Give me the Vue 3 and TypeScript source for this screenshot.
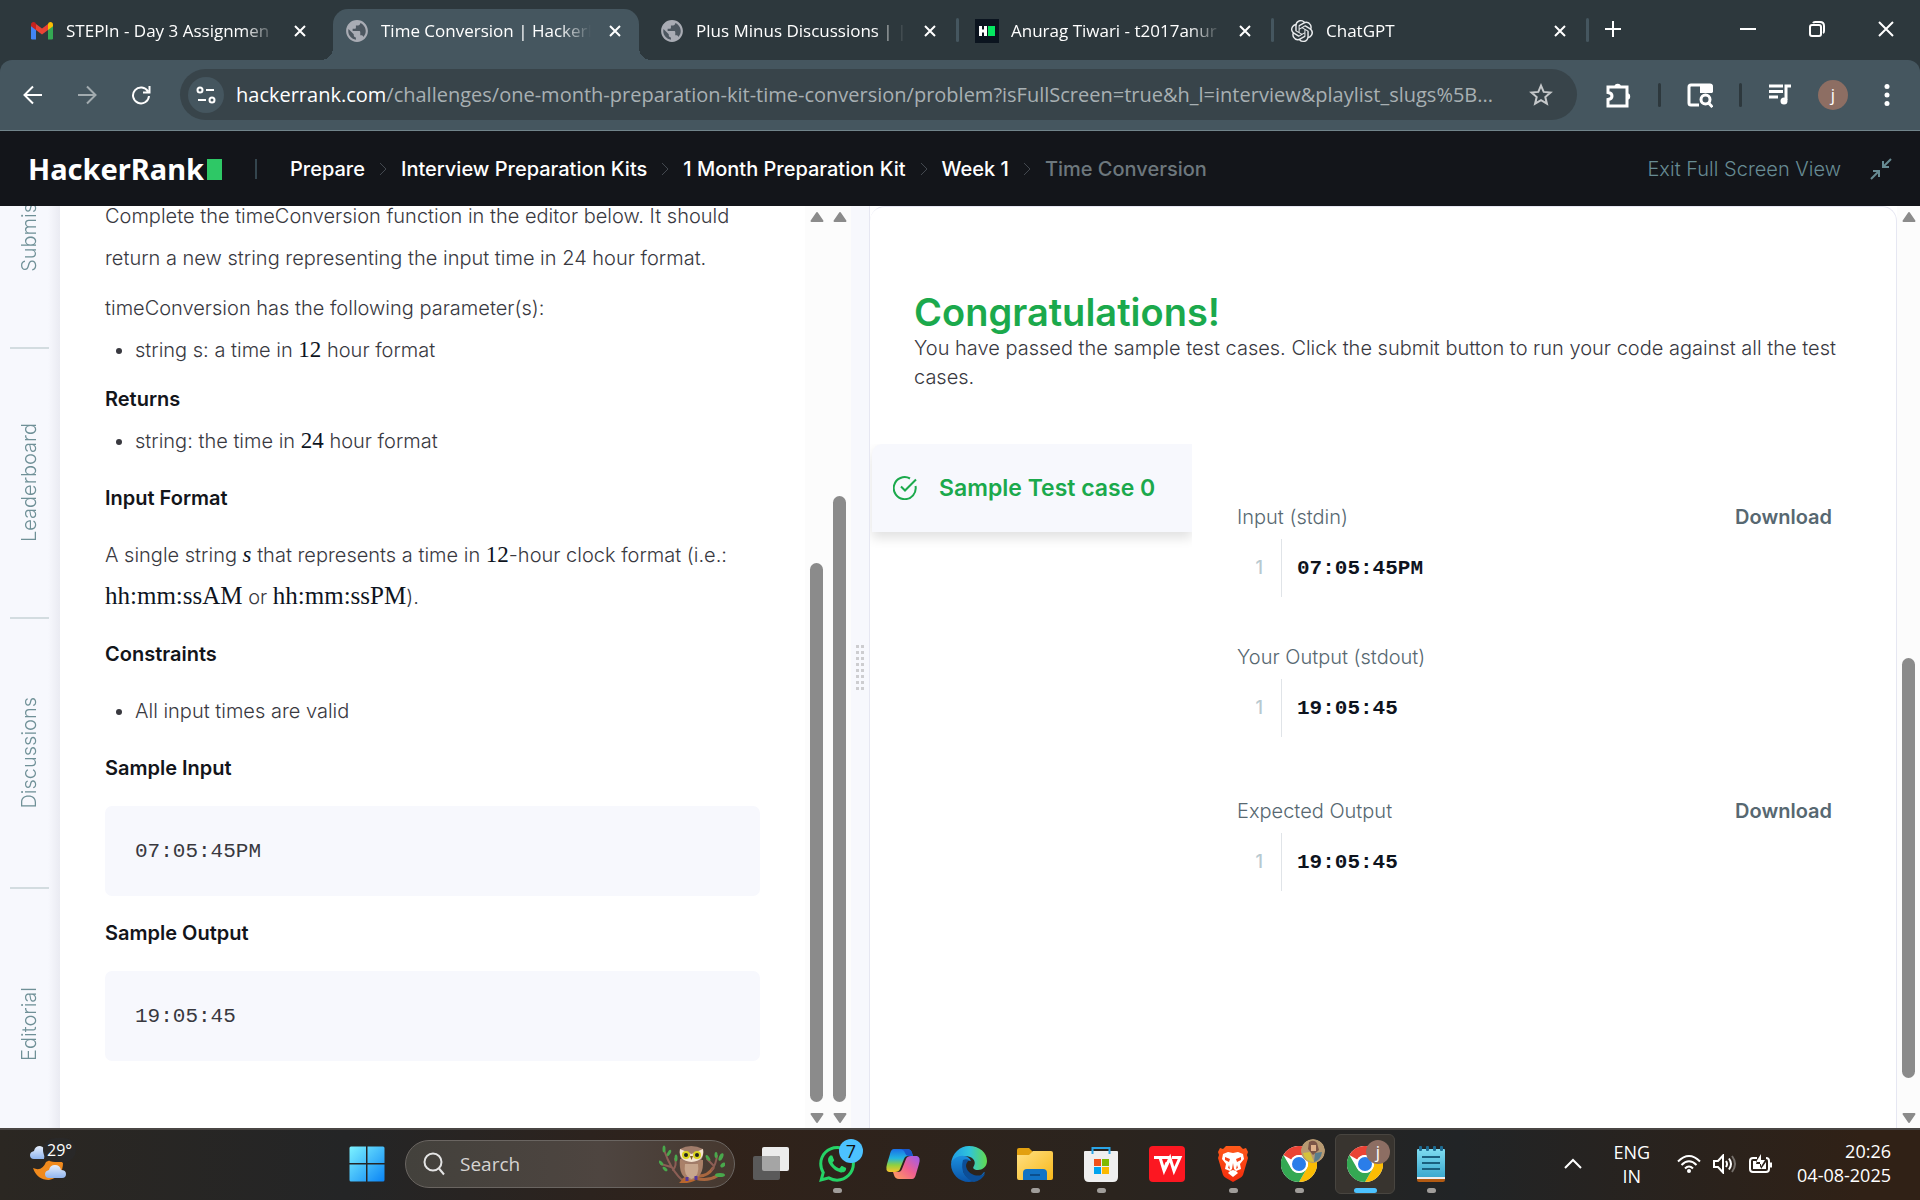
<script setup lang="ts">
interface Tab {
  title: string
  icon: 'gmail' | 'globe' | 'hacker' | 'gpt'
  active?: boolean
  separator?: boolean
}

interface ResultBlock {
  label: string
  value: string
  download: boolean
}

interface Scroll {
  before: number
  thumb: number
  after: number
}

const tabs: Tab[] = [
  { title: 'STEPIn - Day 3 Assignmen', icon: 'gmail' },
  { title: 'Time Conversion | HackerR', icon: 'globe', active: true },
  { title: 'Plus Minus Discussions | | ', icon: 'globe', separator: true },
  { title: 'Anurag Tiwari - t2017anur', icon: 'hacker', separator: true },
  { title: 'ChatGPT', icon: 'gpt', separator: true },
]

const crumbs: string[] = ['Prepare', 'Interview Preparation Kits', '1 Month Preparation Kit', 'Week 1']
const sideTabs: string[] = ['Submissions', 'Leaderboard', 'Discussions', 'Editorial']

const results: ResultBlock[] = [
  { label: 'Input (stdin)', value: '07:05:45PM', download: true },
  { label: 'Your Output (stdout)', value: '19:05:45', download: false },
  { label: 'Expected Output', value: '19:05:45', download: true },
]

const innerScroll: Scroll = { before: 331, thumb: 539, after: 0 }
const outerScroll: Scroll = { before: 264, thumb: 606, after: 0 }
const resultScroll: Scroll = { before: 426, thumb: 420, after: 24 }
const leftScrolls: Scroll[] = [innerScroll, outerScroll]
</script>

<template>
  <div class="screen">
    <!-- Browser tab strip -->
    <div class="strip">
      <div v-for="tab in tabs" :key="tab.title" class="tab" :class="{ active: tab.active, separated: tab.separator }">
        <svg v-if="tab.icon === 'gmail'" class="favicon" viewBox="0 0 24 24">
          <path fill="#4285f4" d="M1 6v13.200q0 1.300 1.300 1.300H6V10z" />
          <path fill="#34a853" d="M18 10v10.500h3.700q1.300 0 1.300-1.300V6z" />
          <path fill="#fbbc04" d="M18 5v6l5-3.800V5.500C23 3 20.400 2.300 18.800 3.600z" />
          <path fill="#ea4335" d="M6 11V5l6 4.600L18 5v6l-6 4.600z" />
          <path fill="#c5221f" d="M1 5.500v1.700L6 11V5l-.8-1.400C3.600 2.300 1 3 1 5.500z" />
        </svg>
        <svg v-else-if="tab.icon === 'globe'" class="favicon" viewBox="1 1 22 22">
          <circle cx="12" cy="12" r="9" fill="#4d5760" />
          <path fill="#a9acb4" d="M12 2C6.480 2 2 6.480 2 12s4.480 10 10 10 10-4.480 10-10S17.520 2 12 2zm-1 17.930c-3.950-.49-7-3.850-7-7.930 0-.62.08-1.210.21-1.790L9 15v1c0 1.100.9 2 2 2v1.930zm6.900-2.540c-.26-.81-1-1.390-1.900-1.390h-1v-3c0-.55-.45-1-1-1H8v-2h2c.55 0 1-.45 1-1V7h2c1.100 0 2-.9 2-2v-.41c2.930 1.190 5 4.060 5 7.410 0 2.080-.8 3.970-2.100 5.390z" />
        </svg>
        <svg v-else-if="tab.icon === 'hacker'" class="favicon" viewBox="0 0 24 24">
          <rect width="24" height="24" fill="#0b141f" />
          <path fill="#fff" d="M4 7h3v3.500h2V7h3v10H9v-3.500H7V17H4z" />
          <rect x="13" y="7" width="7" height="10" fill="#05e761" />
        </svg>
        <svg v-else class="favicon" viewBox="-1 -1 26 26">
          <path fill="#e8eaec" d="M22.2819 9.8211a5.9847 5.9847 0 0 0-.5157-4.9108 6.0462 6.0462 0 0 0-6.5098-2.9A6.0651 6.0651 0 0 0 4.9807 4.1818a5.9847 5.9847 0 0 0-3.9977 2.9 6.0462 6.0462 0 0 0 .7427 7.0966 5.98 5.98 0 0 0 .511 4.9107 6.051 6.051 0 0 0 6.5146 2.9001A5.9847 5.9847 0 0 0 13.2599 24a6.0557 6.0557 0 0 0 5.7718-4.2058 5.9894 5.9894 0 0 0 3.9977-2.9001 6.0557 6.0557 0 0 0-.7475-7.0729zm-9.022 12.6081a4.4755 4.4755 0 0 1-2.8764-1.0408l.1419-.0804 4.7783-2.7582a.7948.7948 0 0 0 .3927-.6813v-6.7369l2.02 1.1686a.071.071 0 0 1 .038.052v5.5826a4.504 4.504 0 0 1-4.4945 4.4944zm-9.6607-4.1254a4.4708 4.4708 0 0 1-.5346-3.0137l.142.0852 4.783 2.7582a.7712.7712 0 0 0 .7806 0l5.8428-3.3685v2.3324a.0804.0804 0 0 1-.0332.0615L9.74 19.9502a4.4992 4.4992 0 0 1-6.1408-1.6464zM2.3408 7.8956a4.485 4.485 0 0 1 2.3655-1.9728V11.6a.7664.7664 0 0 0 .3879.6765l5.8144 3.3543-2.0201 1.1685a.0757.0757 0 0 1-.071 0l-4.8303-2.7865A4.504 4.504 0 0 1 2.3408 7.872zm16.5963 3.8558L13.1038 8.364 15.1192 7.2a.0757.0757 0 0 1 .071 0l4.8303 2.7913a4.4944 4.4944 0 0 1-.6765 8.1042v-5.6772a.79.79 0 0 0-.407-.667zm2.0107-3.0231l-.142-.0852-4.7735-2.7818a.7759.7759 0 0 0-.7854 0L9.409 9.2297V6.8974a.0662.0662 0 0 1 .0284-.0615l4.8303-2.7866a4.4992 4.4992 0 0 1 6.6802 4.66zM8.3065 12.863l-2.02-1.1638a.0804.0804 0 0 1-.038-.0567V6.0742a4.4992 4.4992 0 0 1 7.3757-3.4537l-.142.0805L8.704 5.459a.7948.7948 0 0 0-.3927.6813zm1.0976-2.3654l2.602-1.4998 2.6069 1.4998v2.9994l-2.5974 1.4997-2.6067-1.4997Z" />
        </svg>
        <span class="tab-title">{{ tab.title }}</span>
        <button class="tab-close" aria-label="Close tab">
          <svg width="12" height="12" viewBox="0 0 12 12"><path d="M1 1l10 10M11 1L1 11" /></svg>
        </button>
      </div>
      <button class="new-tab" aria-label="New tab">
        <svg width="16" height="16" viewBox="0 0 16 16"><path d="M8 0v16M0 8h16" /></svg>
      </button>
      <div class="window-buttons">
        <button aria-label="Minimize"><svg width="16" height="16" viewBox="0 0 16 16"><path d="M0 8h16" /></svg></button>
        <button aria-label="Restore">
          <svg width="16" height="16" viewBox="0 0 16 16"><rect x="1" y="4" width="11" height="11" rx="2" /><path d="M4 2q.5-1 2-1h5q4 0 4 4v5q0 1.500-1 2" /></svg>
        </button>
        <button aria-label="Close"><svg width="16" height="16" viewBox="0 0 16 16"><path d="M1 1l14 14M15 1L1 15" /></svg></button>
      </div>
    </div>

    <!-- Browser toolbar -->
    <div class="toolbar">
      <div class="nav">
        <button aria-label="Back"><svg width="20" height="20" viewBox="0 0 20 20"><path d="M19 10H2M10 1.500L1.500 10l8.500 8.500" /></svg></button>
        <button aria-label="Forward" class="dim"><svg width="20" height="20" viewBox="0 0 20 20"><path d="M1 10h17M10 1.500l8.500 8.500-8.500 8.500" /></svg></button>
        <button aria-label="Reload"><svg width="20" height="20" viewBox="0 0 20 20"><path d="M17 6.500A8 8 0 1 0 18 11M18.500 1v6.500H12" /></svg></button>
      </div>
      <div class="omnibox">
        <button class="site-info" aria-label="View site information">
          <svg width="20" height="20" viewBox="0 0 20 20"><circle cx="4" cy="5" r="2.500" /><path d="M10 5h8M2 15h8" /><circle cx="16" cy="15" r="2.500" /></svg>
        </button>
        <div class="url"><b>hackerrank.com</b>/challenges/one-month-preparation-kit-time-conversion/problem?isFullScreen=true&amp;h_l=interview&amp;playlist_slugs%5B...</div>
        <button class="star" aria-label="Bookmark this tab">
          <svg width="24" height="24" viewBox="0 0 24 24"><path d="M12 2.600l2.700 6.300 6.800.6-5.200 4.500 1.600 6.700-5.900-3.600-5.900 3.600 1.600-6.700-5.200-4.500 6.800-.6z" /></svg>
        </button>
      </div>
      <div class="tools">
        <button aria-label="Extensions">
          <svg width="26" height="26" viewBox="0 0 26 26"><path d="M2 5h19v19H2v-6.500q4-.5 4-3.500t-4-3.500z" /><path class="solid" d="M8.500 5a3.200 3.200 0 0 1 6.400 0zM21 11.300a3.200 3.200 0 0 1 0 6.400z" /></svg>
        </button>
        <i class="bar"></i>
        <button aria-label="Search this page">
          <svg width="26" height="26" viewBox="0 0 26 26"><path d="M12 23H4q-2 0-2-2V5q0-2 2-2h19q1.500 0 1.500 2v5" /><path class="solid" d="M13 2h11q1.500 0 1.500 1.500V11H13z" /><circle cx="18.500" cy="17.500" r="4.500" /><path d="M21.500 21l4 4" /></svg>
        </button>
        <i class="bar"></i>
        <button aria-label="Media controls">
          <svg width="24" height="24" viewBox="0 0 24 24"><path d="M1 3h14M1 8.500h14M1 14h9" /><path d="M18 17V3h5" /><circle class="solid" cx="16" cy="18" r="3.500" /></svg>
        </button>
        <button class="profile" aria-label="Profile">j</button>
        <button class="menu" aria-label="Menu">
          <svg width="6" height="24" viewBox="0 0 6 24"><circle class="solid" cx="3" cy="3.500" r="2.500" /><circle class="solid" cx="3" cy="12" r="2.500" /><circle class="solid" cx="3" cy="20.500" r="2.500" /></svg>
        </button>
      </div>
    </div>

    <!-- Site header -->
    <header class="site-header">
      <a href="#" class="logo">HackerRank<i></i></a>
      <nav class="crumbs" aria-label="Breadcrumb">
        <template v-for="crumb in crumbs" :key="crumb">
          <a href="#">{{ crumb }}</a>
          <svg width="8" height="14" viewBox="0 0 8 14"><path d="M1 1l6 6-6 6" /></svg>
        </template>
        <span>Time Conversion</span>
      </nav>
      <a href="#" class="exit">
        Exit Full Screen View
        <svg width="22" height="22" viewBox="0 0 22 22"><path d="M21 1l-8 8M13 3v6h6M1 21l8-8M3 13h6v6" /></svg>
      </a>
    </header>

    <main class="workspace">
      <nav class="side">
        <a v-for="name in sideTabs" :key="name" href="#"><span>{{ name }}</span></a>
      </nav>

      <article class="problem">
        <p>Complete the timeConversion function in the editor below. It should return a new string representing the input time in 24 hour format.</p>
        <p class="close">timeConversion has the following parameter(s):</p>
        <ul><li>string s: a time in <b class="math">12</b> hour format</li></ul>
        <h3 class="close">Returns</h3>
        <ul><li>string: the time in <b class="math">24</b> hour format</li></ul>
        <h3>Input Format</h3>
        <p class="spaced">A single string <b class="math"><i>s</i></b> that represents a time in <b class="math">12</b>-hour clock format (i.e.: <span class="math">hh:mm:ssAM</span> or <span class="math">hh:mm:ssPM</span>).</p>
        <h3>Constraints</h3>
        <ul class="spaced"><li>All input times are valid</li></ul>
        <h3>Sample Input</h3>
        <pre>07:05:45PM</pre>
        <h3>Sample Output</h3>
        <pre>19:05:45</pre>
      </article>

      <div v-for="(s, i) in leftScrolls" :key="i" class="scroll">
        <svg width="16" height="12" viewBox="0 0 16 12"><path d="M8 2l5.500 8h-11z" /></svg>
        <div :style="{ flexGrow: s.before }"></div>
        <div class="thumb" :style="{ flexGrow: s.thumb }"></div>
        <div :style="{ flexGrow: s.after }"></div>
        <svg width="16" height="12" viewBox="0 0 16 12"><path d="M8 10l5.500-8h-11z" /></svg>
      </div>

      <div class="splitter"><div class="grip"></div><div class="grip"></div></div>

      <section class="result">
        <div class="message">
          <h1>Congratulations!</h1>
          <p>You have passed the sample test cases. Click the submit button to run your code against all the test cases.</p>
        </div>
        <div class="cases">
          <div class="case-list">
            <button class="case">
              <svg width="24" height="24" viewBox="0 0 24 24"><path d="M22.500 10a11 11 0 1 1-5.500-7.500M8 10.500l4 4L23 3.500" /></svg>
              Sample Test case 0
            </button>
          </div>
          <div class="details">
            <div v-for="block in results" :key="block.label" class="detail" :class="{ plain: !block.download }">
              <div class="detail-head">
                <span>{{ block.label }}</span>
                <a v-if="block.download" href="#">Download</a>
              </div>
              <div class="code"><span class="line-number">1</span><code>{{ block.value }}</code></div>
            </div>
          </div>
        </div>
      </section>

      <div class="scroll">
        <svg width="16" height="12" viewBox="0 0 16 12"><path d="M8 2l5.500 8h-11z" /></svg>
        <div :style="{ flexGrow: resultScroll.before }"></div>
        <div class="thumb" :style="{ flexGrow: resultScroll.thumb }"></div>
        <div :style="{ flexGrow: resultScroll.after }"></div>
        <svg width="16" height="12" viewBox="0 0 16 12"><path d="M8 10l5.500-8h-11z" /></svg>
      </div>
    </main>

    <!-- Desktop taskbar -->
    <footer class="taskbar">
      <svg width="0" height="0" class="defs">
        <defs>
          <linearGradient id="win" x1="0" y1="0" x2="1" y2="1"><stop offset="0" stop-color="#7df3ff" /><stop offset="1" stop-color="#0a84f5" /></linearGradient>
          <linearGradient id="cloud" x1="0" y1="0" x2="0" y2="1"><stop offset="0" stop-color="#e6effc" /><stop offset="1" stop-color="#8fb4ee" /></linearGradient>
          <linearGradient id="cop1" x1="0" y1="0" x2="0" y2="1"><stop offset="0" stop-color="#1a6fe8" /><stop offset=".4" stop-color="#22b4e0" /><stop offset=".7" stop-color="#8fd13f" /><stop offset="1" stop-color="#f8c32c" /></linearGradient>
          <linearGradient id="cop2" x1="1" y1="0" x2="0" y2="1"><stop offset="0" stop-color="#9b5cf0" /><stop offset=".5" stop-color="#f0608f" /><stop offset="1" stop-color="#ffa25c" /></linearGradient>
          <linearGradient id="edge1" x1="0" y1="0" x2="1" y2="0"><stop offset="0" stop-color="#1f9be6" /><stop offset=".5" stop-color="#2fc3dd" /><stop offset="1" stop-color="#62db4e" /></linearGradient>
          <linearGradient id="edge2" x1="0" y1="0" x2="0" y2="1"><stop offset="0" stop-color="#1b8fdf" /><stop offset="1" stop-color="#0a54a8" /></linearGradient>
          <linearGradient id="fold" x1="0" y1="0" x2="1" y2="1"><stop offset="0" stop-color="#ffe083" /><stop offset="1" stop-color="#f8b81a" /></linearGradient>
          <linearGradient id="note" x1="0" y1="0" x2="0" y2="1"><stop offset="0" stop-color="#7fdcf0" /><stop offset="1" stop-color="#3ba9cf" /></linearGradient>
          <linearGradient id="lion" x1="0" y1="0" x2="0" y2="1"><stop offset="0" stop-color="#ff5a1a" /><stop offset="1" stop-color="#f32a0c" /></linearGradient>
          <g id="chrome">
            <circle cx="18" cy="18" r="18" fill="#fff" />
            <path fill="#ea4335" d="M2.400 9A18 18 0 0 1 33.600 9H18a9 9 0 0 0-7.800 4.500z" />
            <path fill="#fbbc04" d="M33.600 9A18 18 0 0 1 18 36l7.800-13.500A9 9 0 0 0 18 9z" />
            <path fill="#34a853" d="M18 36A18 18 0 0 1 2.400 9l7.800 13.500A9 9 0 0 0 25.800 22.500z" />
            <circle cx="18" cy="18" r="9" fill="#fff" />
            <circle cx="18" cy="18" r="7" fill="#2a7de9" />
          </g>
        </defs>
      </svg>
      <button class="weather" aria-label="Weather">
        <svg width="40" height="36" viewBox="0 0 40 36">
          <path fill="url(#cloud)" d="M5 14q-4 0-4-4 0-3 4-4 1-5 6-5 5 1 5 6l-1 7z" />
          <path fill="#f08a1d" d="M17 17q9-6 17 1 0 14-14 17Q8 35 4 23q9 4 13-6z" />
          <path fill="url(#cloud)" d="M20 33q-4 0-4-4 0-3 4-4 1-5 6-5t6 5q5 0 5 4t-4 4z" />
        </svg>
        <span>29°</span>
      </button>
      <div class="dock">
        <button class="app" aria-label="Start">
          <svg width="36" height="36" viewBox="0 0 36 36"><path fill="url(#win)" d="M2 .5h15v16.500H.5V2Q.5.500 2 .5zM18.500.5H34q1.500 0 1.500 1.500v15h-17zM.5 18.500H17v17H2q-1.500 0-1.500-1.500zM18.500 18.500h17V34q0 1.500-1.500 1.500H18.500z" /></svg>
        </button>
        <label class="search">
          <svg width="24" height="24" viewBox="0 0 24 24"><circle cx="11" cy="10" r="8.500" /><path d="M17 16.500l5 6" /></svg>
          <input type="text" placeholder="Search" aria-label="Search" />
          <svg class="owl" width="66" height="38" viewBox="0 0 66 38">
            <g fill="none" stroke="#8c5e55" stroke-width="2" stroke-linecap="round"><path d="M24 36Q15 28 9 15L5 5M12 22L2 19M14 25Q18 20 16 14" /><path stroke="#a9673f" stroke-width="3" d="M24 35q7-6 16-4 9 0 14-8M36 33q12 4 22-2" /><path d="M53 25q4-6 5-14M54 20l-6-6" /></g>
            <path fill="#b9672f" d="M20 38q4-5 12-6l8 1q-5 4-12 5z" />
            <g fill="#49a84c"><ellipse cx="5" cy="4" rx="1.500" ry="3.500" /><ellipse cx="10" cy="8" rx="1.500" ry="3.500" transform="rotate(30 10 8)" /><ellipse cx="2" cy="18" rx="1.500" ry="3" transform="rotate(-40 2 18)" /><ellipse cx="17" cy="13" rx="1.500" ry="3.500" /><ellipse cx="6" cy="24" rx="1.500" ry="3" transform="rotate(-50 6 24)" /><ellipse cx="62" cy="12" rx="2" ry="4" transform="rotate(25 62 12)" /><ellipse cx="57" cy="10" rx="1.500" ry="3" /><ellipse cx="49" cy="13" rx="1.500" ry="3.500" transform="rotate(-35 49 13)" /><ellipse cx="61" cy="30" rx="5" ry="2" /><ellipse cx="64" cy="20" rx="2" ry="3" transform="rotate(50 64 20)" /></g>
            <path fill="#a98068" d="M21 14Q19 33 32 35q13-2 12-20z" />
            <path fill="#c7a68d" d="M26 19h13q2 12-6.500 15Q24 31 26 19z" />
            <path fill="#a07c6a" d="M21 4q11-6 23 0 2 14-11.500 15Q19 18 21 4z" />
            <path fill="#f3e3cf" d="M21 4l11.500 5L44 4q2 12-11.500 13Q19 16 21 4z" />
            <circle cx="27" cy="10" r="4" fill="#d9d320" /><circle cx="38" cy="10" r="4" fill="#d9d320" />
            <circle cx="27" cy="10" r="2" fill="#222" /><circle cx="38" cy="10" r="2" fill="#222" />
            <path fill="#7a5a20" d="M31 11h3l-1.500 4z" />
            <path stroke="#54389b" stroke-width="3" d="M28 32v4M37 31v4" />
          </svg>
        </label>
        <button class="app" aria-label="Task view">
          <svg width="36" height="36" viewBox="0 0 36 36"><rect x="9" y="1" width="27" height="24" rx="2" fill="#ececec" /><rect y="10" width="27" height="24" rx="2" fill="#5a5a5a" /><path fill="#a5a5a5" d="M9 10h16q2 0 2 2v13H11q-2 0-2-2z" /></svg>
        </button>
        <button class="app running" aria-label="WhatsApp">
          <svg width="36" height="36" viewBox="0 0 24 24"><path fill="#25d366" d="M17.472 14.382c-.297-.149-1.758-.867-2.03-.967-.273-.099-.471-.148-.67.15-.197.297-.767.966-.94 1.164-.173.199-.347.223-.644.075-.297-.15-1.255-.463-2.39-1.475-.883-.788-1.48-1.761-1.653-2.059-.173-.297-.018-.458.13-.606.134-.133.298-.347.446-.52.149-.174.198-.298.298-.497.099-.198.05-.371-.025-.52-.075-.149-.669-1.612-.916-2.207-.242-.579-.487-.5-.669-.51-.173-.008-.371-.01-.57-.01-.198 0-.52.074-.792.372-.272.297-1.04 1.016-1.04 2.479 0 1.462 1.065 2.875 1.213 3.074.149.198 2.096 3.2 5.077 4.487.709.306 1.262.489 1.694.625.712.227 1.36.195 1.871.118.571-.085 1.758-.719 2.006-1.413.248-.694.248-1.289.173-1.413-.074-.124-.272-.198-.57-.347m-5.421 7.403h-.004a9.87 9.87 0 01-5.031-1.378l-.361-.214-3.741.982.998-3.648-.235-.374a9.86 9.86 0 01-1.51-5.26c.001-5.45 4.436-9.884 9.888-9.884 2.64 0 5.122 1.03 6.988 2.898a9.825 9.825 0 012.893 6.994c-.003 5.45-4.437 9.884-9.885 9.884m8.413-18.297A11.815 11.815 0 0012.05 0C5.495 0 .16 5.335.157 11.892c0 2.096.547 4.142 1.588 5.945L.057 24l6.305-1.654a11.882 11.882 0 005.683 1.448h.005c6.554 0 11.89-5.335 11.893-11.893a11.821 11.821 0 00-3.48-8.413Z" /></svg>
          <span class="badge count">7</span>
        </button>
        <button class="app" aria-label="Copilot">
          <svg width="36" height="36" viewBox="0 0 36 36">
            <path fill="url(#cop1)" d="M9 3h13q4 0 5 4l1 3h-5q-3 0-4 3l-4 10q-1 3-5 3H4Q0 25 2 18L5 8q1-5 4-5z" />
            <path fill="url(#cop2)" d="M27 33H14q-4 0-5-4l-1-3h5q3 0 4-3l4-10q1-3 5-3h6q4 1 2 8l-3 10q-1 5-4 5z" />
            <path fill="#1956c9" d="M14 3h8q4 0 5 4l1 3h-5q-2 0-3-3-1-4-6-4z" />
          </svg>
        </button>
        <button class="app" aria-label="Edge">
          <svg width="36" height="36" viewBox="0 0 36 36">
            <path fill="url(#edge1)" d="M0 18C1 7 9 0 18 0c11 0 18 7 18 15 0 6-5 9-9 9-4 0-6-2-4-4 3-6-3-10-9-10C7 10 1 14 0 18z" />
            <path fill="url(#edge2)" d="M0 18c1-5 7-9 13-8 3 0 6 2 7 5-4-2-8 2-8 8 0 5 4 9 9 9 6 0 10-3 12-6 1 0 1 1 0 2-3 5-9 8-15 8C8 36 0 28 0 18z" />
            <path fill="#0c4e97" d="M12 14c-3 10 2 19 11 22 5-1 9-4 11-8-8 4-18 0-19-8 0-2 1-4 3-6-2-1-4-1-6 0z" />
          </svg>
        </button>
        <button class="app running" aria-label="File Explorer">
          <svg width="36" height="36" viewBox="0 0 36 36"><path fill="#e2a00f" d="M0 4q0-2 2-2h10l4 4v8H0z" /><path fill="url(#fold)" d="M0 9h12l4-4h18q2 0 2 2v25q0 2-2 2H2q-2 0-2-2z" /><path fill="#1273c4" d="M6 34v-7q0-4 4-4h16q4 0 4 4v7z" /><path stroke="#0b4f8d" stroke-width="2" d="M13 29h10" /></svg>
        </button>
        <button class="app running" aria-label="Microsoft Store">
          <svg width="36" height="36" viewBox="0 0 36 36"><path fill="#efefef" d="M1 6q0-1 1-1h32q1 0 1 1v25q0 5-5 5H6q-5 0-5-5z" /><path fill="none" stroke="#2aa5e8" stroke-width="2" d="M9.500 8V2h17v6" /><path fill="#f1511b" d="M11 13h7v7h-7z" /><path fill="#80b900" d="M19 13h7v7h-7z" /><path fill="#00a3ee" d="M11 21h7v7h-7z" /><path fill="#fbb900" d="M19 21h7v7h-7z" /></svg>
        </button>
        <button class="app" aria-label="WPS Office">
          <svg width="36" height="36" viewBox="0 0 36 36"><rect width="36" height="36" rx="4" fill="#fc1721" /><path fill="none" stroke="#fff" stroke-width="3" d="M5 11.500h6l4 13 3-8M11 11.500h11M15 25l6-13 4 13 6-13.500h-8" /></svg>
        </button>
        <button class="app running" aria-label="Brave">
          <svg width="30" height="36" viewBox="0 0 30 36">
            <path fill="url(#lion)" d="M8 0h14l3 3 3-1 2 4-1 3 1 3-5 17q-1 2-3 3l-7 4-7-4q-2-1-3-3L0 12l1-3-1-3 2-4 3 1z" />
            <path fill="#fff" d="M5 8l5-2 5 1 5-1 5 2 1 5-4 5 1 5-5 2 2 2-5 4-5-4 2-2-5-2 1-5-4-5z" />
            <path fill="#f5441a" d="M7 11l5 2-1 3-4-2zM23 11l-5 2 1 3 4-2zM15 17l1 6 2 2-3-1-3 1 2-2zM11 19l-1 3 2 1zM19 19l1 3-2 1z" />
          </svg>
        </button>
        <button class="app running" aria-label="Chrome, other profile">
          <svg width="36" height="36" viewBox="0 0 36 36"><use href="#chrome" /></svg>
          <svg class="badge" viewBox="0 0 24 24"><circle cx="12" cy="12" r="12" fill="#b79a72" /><path fill="#7c5648" d="M8 3q5-3 8 1l2 7-6 5-5-6z" /><path fill="#e0b18b" d="M10 6h5v6h-5z" /><path fill="#d5c23c" d="M2 14l7-1 4 10q-9 0-11-9z" /><path fill="#5a7d8c" d="M14 14l7-1q-1 8-8 10z" /></svg>
        </button>
        <button class="app running current" aria-label="Chrome">
          <svg width="36" height="36" viewBox="0 0 36 36"><use href="#chrome" /></svg>
          <span class="badge person">j</span>
        </button>
        <button class="app running" aria-label="Notepad">
          <svg width="30" height="36" viewBox="0 0 30 36"><path fill="#b25a12" d="M1 32h28v2q0 2-2 2H3q-2 0-2-2z" /><path fill="#eee" d="M1 30h28v3H1z" /><path fill="url(#note)" d="M1 4q0-1 1-1h26q1 0 1 1v27H1z" /><g fill="#1d6c93"><rect x="3" width="3" height="5" rx="1" /><rect x="10" width="3" height="5" rx="1" /><rect x="17" width="3" height="5" rx="1" /><rect x="24" width="3" height="5" rx="1" /></g><path stroke="#1a5f7e" stroke-width="2" d="M6 11h18M6 17h18M6 23h18" /></svg>
        </button>
      </div>
      <div class="tray">
        <button aria-label="Show hidden icons"><svg width="18" height="12" viewBox="0 0 18 12"><path d="M1 10l8-8 8 8" /></svg></button>
        <button class="lang">ENG<br />IN</button>
        <button class="status" aria-label="Network, volume, battery">
          <svg width="24" height="20" viewBox="0 0 24 20"><path d="M1 7.500q11-11 22 0M4.500 11q7.500-7.500 15 0M8 14.500q4-4 8 0" /><circle class="solid" cx="12" cy="17" r="2" /></svg>
          <svg width="24" height="20" viewBox="0 0 24 20"><path d="M1 7h4l5-5.500v17L5 13H1zM13 7q2 3 0 6M16 4.500q4 5.500 0 11" /><path opacity=".35" d="M19 2q6 8 0 16" /></svg>
          <svg width="24" height="20" viewBox="0 0 24 20"><path d="M8 4H4Q1 4 1 7v8q0 3 3 3h13q3 0 3-3V7q0-3-3-3M22 8.500v5" /><path class="solid" d="M4 7h4l-1 3h5v5l5-7v7H4zM12 0L7 8h4v6l5-8h-4z" /></svg>
        </button>
        <div class="clock">20:26<br />04-08-2025</div>
      </div>
    </footer>
  </div>
</template>

<style>
body {
  margin: 0;
}
</style>

<style scoped>
.screen {
  display: flex;
  flex-direction: column;
  height: 100vh;
  overflow: hidden;
  background: #2d383d;
  color: #39424e;
  font-family: "Open Sans", "Noto Sans", sans-serif;
}
.screen * {
  box-sizing: border-box;
}
button {
  display: flex;
  align-items: center;
  justify-content: center;
  margin: 0;
  padding: 0;
  border: 0;
  background: none;
  color: inherit;
  font: inherit;
}
a {
  color: inherit;
  text-decoration: none;
}
svg {
  flex: none;
}

/* tab strip */
.strip {
  display: flex;
  align-items: stretch;
  flex: none;
  height: 60px;
  padding: 9px 0 0 18px;
  color: #fff;
}
.tab {
  position: relative;
  display: flex;
  align-items: center;
  flex: 0 1 315px;
  min-width: 0;
  height: 43px;
  padding: 0 21px 0 12px;
}
.tab.active {
  height: 51px;
  padding-bottom: 8px;
}
.tab.active::before {
  content: "";
  position: absolute;
  inset: 0 9px 0 0;
  border-radius: 15px 15px 0 0;
  background: #45565f;
}
.tab.active::after {
  content: "";
  position: absolute;
  left: -12px;
  right: -3px;
  bottom: 0;
  height: 12px;
  background:
    radial-gradient(circle at 0 0, transparent 12px, #45565f 12px) left / 12px 12px no-repeat,
    radial-gradient(circle at 100% 0, transparent 12px, #45565f 12px) right / 12px 12px no-repeat;
}
.tab > * {
  position: relative;
}
.tab.separated::after {
  content: "";
  position: absolute;
  right: 4px;
  top: 9px;
  width: 3px;
  height: 24px;
  border-radius: 2px;
  background: #45565f;
}
.favicon {
  width: 24px;
  height: 24px;
}
.tab-title {
  flex: 1;
  min-width: 0;
  margin: 0 4px 0 12px;
  overflow: hidden;
  white-space: nowrap;
  font-size: 17px;
  line-height: 24px;
  mask-image: linear-gradient(to left, transparent 8px, #000 40px);
}
.tab-close {
  width: 24px;
  height: 24px;
}
.tab-close svg,
.new-tab svg,
.window-buttons svg {
  fill: none;
  stroke: #fff;
  stroke-width: 2;
}
.new-tab {
  width: 40px;
  height: 40px;
}
.window-buttons {
  display: flex;
  height: 40px;
  margin-left: auto;
}
.window-buttons button {
  width: 69px;
}

/* toolbar */
.toolbar {
  display: flex;
  align-items: center;
  flex: none;
  height: 71px;
  padding: 0 20px 1px 23px;
  border-bottom: 1px solid #71848b;
  border-radius: 12px 12px 0 0;
  background: #45565f;
  color: #fff;
}
.nav {
  display: flex;
  gap: 34px;
  margin-right: 29px;
}
.nav svg {
  fill: none;
  stroke: #fff;
  stroke-width: 2;
}
.nav .dim {
  opacity: 0.5;
}
.omnibox {
  display: flex;
  align-items: center;
  flex: 1;
  min-width: 0;
  height: 51px;
  padding: 0 24px 0 8px;
  border-radius: 26px;
  background: #38444a;
}
.site-info {
  width: 36px;
  height: 36px;
  border-radius: 50%;
  background: #45565f;
}
.site-info svg,
.star svg {
  fill: none;
  stroke: #fff;
  stroke-width: 2;
}
.star svg {
  stroke: #c5c8ca;
}
.url {
  flex: 1;
  min-width: 0;
  margin: 0 12px;
  overflow: hidden;
  white-space: nowrap;
  font-size: 20px;
  line-height: 28px;
  color: #a8b0b3;
}
.url b {
  font-weight: 400;
  color: #fff;
}
.tools {
  display: flex;
  align-items: center;
  gap: 26px;
  margin-left: 29px;
}
.tools svg {
  fill: none;
  stroke: #fff;
  stroke-width: 3;
}
.solid,
.tools .solid {
  fill: #fff;
  stroke: none;
}
.bar {
  width: 3px;
  height: 24px;
  border-radius: 2px;
  background: #2d383d;
}
.profile {
  width: 30px;
  height: 30px;
  border-radius: 50%;
  background: #8d6e63;
  font-size: 17px;
}
.menu {
  width: 26px;
}

/* site header */
.site-header {
  display: flex;
  align-items: center;
  flex: none;
  height: 75px;
  padding: 1px 28px 0;
  background: #13151a;
  color: #fff;
  font-family: Inter, sans-serif;
}
.logo {
  display: flex;
  align-items: center;
  padding-right: 33px;
  font-family: "Noto Sans", sans-serif;
  font-size: 29px;
  font-weight: 700;
  line-height: 36px;
}
.logo i {
  width: 15px;
  height: 21px;
  margin-left: 3px;
  background: #2ec866;
}
.crumbs {
  display: flex;
  align-items: center;
  gap: 14px;
  padding-left: 33px;
  font-size: 20px;
  font-weight: 500;
  line-height: 20px;
  white-space: nowrap;
  border-left: 2px solid #34454e;
}
.crumbs svg {
  fill: none;
  stroke: #43484f;
  stroke-width: 1;
}
.crumbs span {
  color: #6d777d;
}
.exit {
  display: flex;
  align-items: center;
  gap: 29px;
  margin-left: auto;
  color: #678b93;
  font-size: 20px;
  font-weight: 300;
}
.exit svg {
  fill: none;
  stroke: #678b93;
  stroke-width: 2;
}

/* workspace */
.workspace {
  display: flex;
  flex: 1;
  min-height: 0;
  overflow: hidden;
  background: #fff;
  font-family: Inter, sans-serif;
}
.side {
  flex: none;
  width: 60px;
  overflow: hidden;
  background: linear-gradient(to left, #eaebf2, #f7f8fd 12px);
  color: #6f9097;
}
.side a {
  display: flex;
  align-items: center;
  justify-content: center;
  height: 270px;
  margin: 0 11px 0 10px;
  padding-right: 2px;
  border-bottom: 2px solid #d3dce0;
}
.side a:first-child {
  margin-top: -127px;
}
.side a:last-child {
  border: 0;
}
.side span {
  writing-mode: vertical-rl;
  transform: rotate(180deg);
  font-size: 20px;
  font-weight: 300;
  line-height: 24px;
}
.problem {
  flex: 655 1 0;
  min-width: 0;
  margin-top: -11px;
  padding: 0 45px;
  color: #39393f;
  font-size: 20px;
  font-weight: 300;
  line-height: 42px;
}
.problem p,
.problem ul,
.problem h3,
.problem pre {
  margin: 0;
}
.problem h3 {
  margin-top: 15px;
  color: #13151a;
  font-size: 20px;
  font-weight: 600;
}
.problem .close {
  margin-top: 8px;
}
.problem h3.close {
  margin-top: 7px;
}
.problem .spaced {
  margin-top: 15px;
}
.problem ul {
  padding-left: 30px;
}
.math {
  color: #0e141e;
  font-family: "Liberation Serif", serif;
  font-size: 25px;
  line-height: 24px;
}
b.math {
  font-size: 23px;
}
.problem pre {
  margin: 17px 0 16px;
  padding: 25px 30px 23px;
  border-radius: 7px;
  background: #f7f8fd;
  font-family: "Liberation Mono", monospace;
  font-size: 21px;
  font-weight: 400;
}
.scroll {
  display: flex;
  flex-direction: column;
  align-items: center;
  flex: none;
  width: 23px;
  padding: 5px 0 4px;
  background: #fcfcfc;
}
.scroll svg {
  fill: #8b8b8b;
  stroke: #8b8b8b;
  stroke-width: 2;
  stroke-linejoin: round;
}
.scroll svg:first-child {
  margin-bottom: 9px;
}
.scroll svg:last-child {
  margin-top: 10px;
}
.thumb {
  width: 13px;
  border-radius: 7px;
  background: #8b8b8b;
}
.splitter {
  display: flex;
  align-items: center;
  justify-content: center;
  gap: 2px;
  flex: none;
  width: 19px;
  border-right: 1px solid #e6e7f2;
  background: #f7f8fd;
}
.grip {
  width: 3px;
  height: 45px;
  background: repeating-linear-gradient(to bottom, #cdcdd0 0 3px, #f7f8fd 3px 6px);
}

/* result panel */
.result {
  flex: 1026 1 0;
  min-width: 0;
  padding-top: 83px;
  border-top: 1px solid #e6e7f2;
  border-right: 1px solid #e6e7f2;
  border-radius: 15px 15px 0 0;
}
.message {
  padding: 0 45px 0 44px;
}
.message h1 {
  margin: 0;
  color: #1ba94c;
  font-size: 38px;
  font-weight: 600;
  line-height: 44px;
}
.message p {
  margin: 0;
  color: #39393f;
  font-size: 20px;
  font-weight: 300;
  line-height: 29px;
}
.cases {
  display: flex;
  margin-top: 52px;
}
.case-list {
  flex: none;
  width: 322px;
  padding: 0 0 24px 2px;
  overflow: hidden;
}
.case {
  justify-content: flex-start;
  gap: 22px;
  width: 100%;
  height: 88px;
  padding-left: 21px;
  border-radius: 10px 0 0 0;
  background: #f7f8fd;
  box-shadow: 0 6px 12px rgba(0, 0, 0, 0.12);
  color: #1ba94c;
  font-size: 23px;
  font-weight: 600;
}
.case svg {
  fill: none;
  stroke: #1ba94c;
  stroke-width: 2;
}
.details {
  flex: 1;
  padding: 58px 64px 0 45px;
}
.detail {
  margin-bottom: 45px;
}
.detail.plain {
  margin-bottom: 59px;
}
.detail-head {
  display: flex;
  justify-content: space-between;
  color: #576871;
  font-size: 20px;
  font-weight: 300;
  line-height: 30px;
}
.detail-head a {
  font-weight: 600;
}
.code {
  display: flex;
  height: 58px;
  margin-top: 7px;
  font-size: 18px;
  line-height: 58px;
}
.line-number {
  width: 45px;
  padding-right: 18px;
  border-right: 1px solid #e0e4e8;
  color: #b7c9d0;
  font-weight: 500;
  text-align: right;
}
.code code {
  padding: 1px 0 0 15px;
  color: #0e141e;
  font-family: "Liberation Mono", monospace;
  font-size: 21px;
  font-weight: 700;
}

/* taskbar */
.taskbar {
  display: flex;
  align-items: center;
  flex: none;
  height: 72px;
  padding-bottom: 2px;
  border-top: 2px solid #4a4644;
  background: linear-gradient(to right, #2b2722, #242526 18%, #30221a 37%, #2b241e 58%, #212426 76%, #302116 97%);
  color: #fff;
}
.defs {
  position: absolute;
}
.weather {
  position: relative;
  align-self: flex-start;
  justify-content: flex-start;
  flex: none;
  width: 337px;
  margin-top: 15px;
  padding-left: 29px;
}
.weather span {
  position: absolute;
  left: 43px;
  top: -7px;
  padding: 0 4px;
  border-radius: 12px;
  background: #292828;
  font-size: 16px;
  line-height: 24px;
}
.dock {
  display: flex;
  align-items: center;
  gap: 6px;
}
.app {
  position: relative;
  width: 60px;
  height: 60px;
  border-radius: 6px;
}
.search {
  display: flex;
  align-items: center;
  width: 330px;
  height: 48px;
  margin: 0 0 0 2px;
  padding: 0 9px 0 16px;
  border: 1px solid #6a6561;
  border-radius: 24px;
  background: linear-gradient(to right, #43413c, #4e4540 60%, #46382f);
}
.search input {
  flex: 1;
  min-width: 0;
  padding: 0 14px;
  border: 0;
  background: none;
  color: #fff;
  font: inherit;
  font-size: 19px;
}
.search input::placeholder {
  color: #d6d4d2;
}
.search > svg:first-child {
  fill: none;
  stroke: #e4e4e4;
  stroke-width: 2;
}
.running::after {
  content: "";
  position: absolute;
  bottom: 1px;
  width: 9px;
  height: 5px;
  border-radius: 3px;
  background: #a09d9a;
}
.current {
  border: 1px solid #484540;
  background: #38342f;
}
.current::after {
  bottom: 0;
  width: 23px;
  background: #4cc2ff;
}
.badge {
  position: absolute;
  top: 5px;
  right: 4px;
  width: 24px;
  height: 24px;
  border-radius: 50%;
  line-height: 24px;
}
.count {
  background: #4cc2ff;
  color: #111;
  font-size: 18px;
}
.person {
  background: #8d6e63;
  font-size: 17px;
}
.tray {
  display: flex;
  align-items: center;
  margin-left: auto;
  padding-right: 29px;
  font-size: 18px;
  line-height: 24px;
}
.tray svg {
  fill: none;
  stroke: #fff;
  stroke-width: 2;
}
.tray svg .solid {
  fill: #fff;
  stroke: none;
}
.lang {
  margin: 0 27px 0 31px;
}
.status {
  gap: 12px;
}
.clock {
  margin-left: 24px;
  padding-bottom: 2px;
  text-align: right;
}
</style>
